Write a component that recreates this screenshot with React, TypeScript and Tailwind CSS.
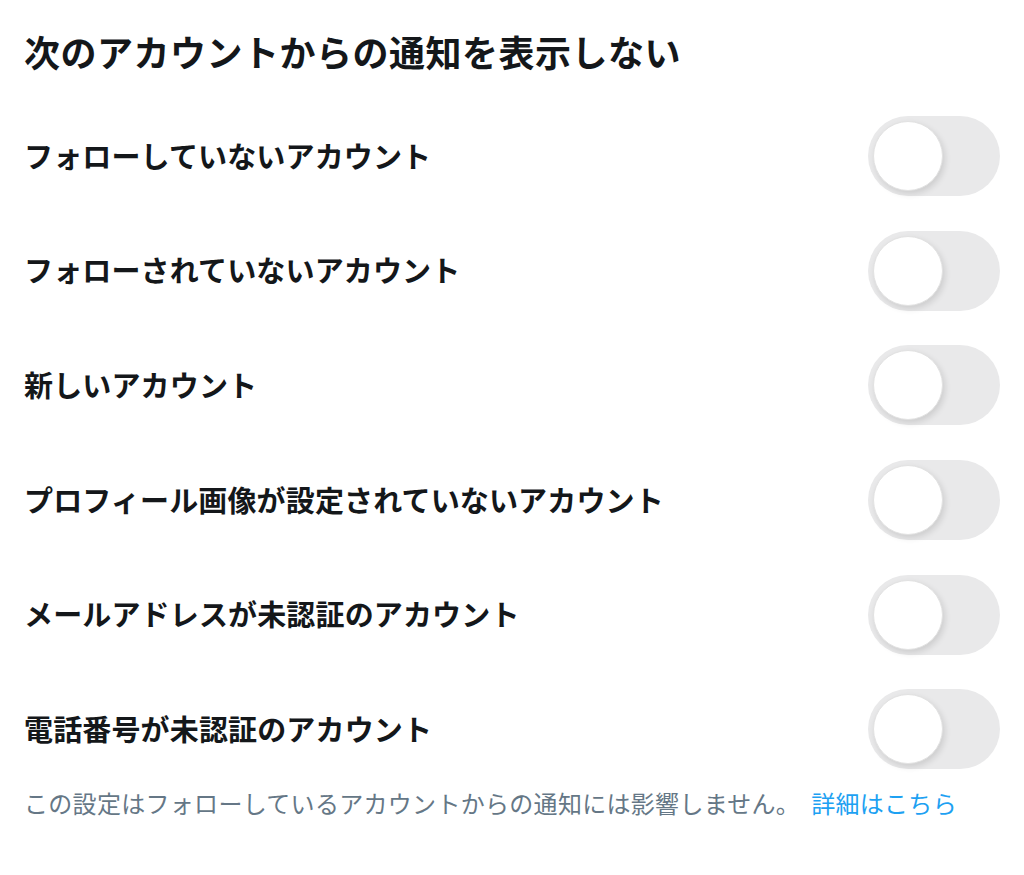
import React from 'react';

const rows = [
  'フォローしていないアカウント',
  'フォローされていないアカウント',
  '新しいアカウント',
  'プロフィール画像が設定されていないアカウント',
  'メールアドレスが未認証のアカウント',
  '電話番号が未認証のアカウント',
];

function Toggle() {
  return (
    <div className="w-[132px] h-[80px] rounded-full bg-[#e9e9ea] flex items-center pl-[5px] shrink-0">
      <div className="w-[70px] h-[70px] rounded-full bg-white border border-[#e2e2e2] shadow-[2px_3px_6px_rgba(0,0,0,0.12)]" />
    </div>
  );
}

export default function App() {
  return (
    <div
      className="min-h-screen bg-white px-[24px] text-[#14171a]"
      style={{ fontFamily: '"Noto Sans CJK JP", "Noto Sans", sans-serif' }}
    >
      <h1 className="pt-[33px] text-[36px] leading-[36px] font-bold tracking-[0.5px]">
        次のアカウントからの通知を表示しない
      </h1>

      <div className="mt-[30px] flex flex-col">
        {rows.map((label) => (
          <div key={label} className="h-[114.6px] flex items-center justify-between">
            <span className="text-[29px] font-bold leading-none tracking-[0.15px] -mt-[2px]">{label}</span>
            <Toggle />
          </div>
        ))}
      </div>

      <p className="mt-0 text-[24px] leading-[32px] tracking-[0.3px] text-[#657786]">
        この設定はフォローしているアカウントからの通知には影響しません。
        <span className="ml-[11px] text-[#1da1f2]">詳細はこちら</span>
      </p>
    </div>
  );
}
